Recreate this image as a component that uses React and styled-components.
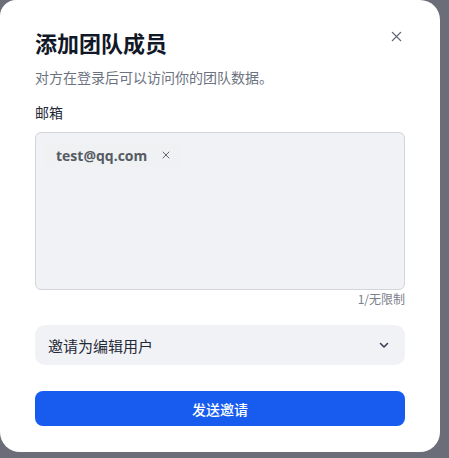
import React from "react";
import styled, { createGlobalStyle } from "styled-components";

const Global = createGlobalStyle`
  html, body { margin: 0; padding: 0; background: #6b6e78; }
  body { font-family: "Noto Sans", "Noto Sans CJK SC", sans-serif; }
  * { box-sizing: border-box; }
`;

const Page = styled.div`
  width: 449px;
  height: 458px;
  overflow: hidden;
`;

const Modal = styled.div`
  width: 440px;
  height: 452px;
  background: #fff;
  border-radius: 16px 20px 20px 20px;
  padding: 27px 35px 0 35px;
  display: flex;
  flex-direction: column;
`;

const Header = styled.div`
  display: flex;
  justify-content: space-between;
  align-items: flex-start;
`;

const Title = styled.h2`
  margin: 0;
  font-size: 22px;
  line-height: 30px;
  font-weight: 700;
  color: #111827;
  font-family: "Noto Sans CJK SC", sans-serif;
`;

const Close = styled.button`
  border: none;
  background: none;
  padding: 0;
  margin-top: 1px;
  margin-right: 1px;
  width: 16px;
  height: 16px;
  display: flex;
  align-items: center;
  justify-content: center;
  color: #6b7280;
`;

const Sub = styled.p`
  margin: 10px 0 0;
  font-size: 14px;
  line-height: 20px;
  color: #6b7280;
  font-family: "Noto Sans CJK SC", sans-serif;
`;

const Label = styled.div`
  margin-top: 15px;
  font-size: 14px;
  line-height: 20px;
  color: #1f2937;
  font-family: "Noto Sans CJK SC", sans-serif;
`;

const Box = styled.div`
  margin-top: 10px;
  height: 158px;
  background: #f1f2f5;
  border: 1px solid #d3d5da;
  border-radius: 6px;
  padding: 10px 9px;
  display: flex;
  align-items: flex-start;
`;

const Tag = styled.span`
  display: inline-flex;
  align-items: center;
  gap: 15px;
  height: 24px;
  padding: 0 12px 0 11px;
  background: #f0f1f3;
  border-radius: 4px;
  font-family: "Open Sans", "Noto Sans", sans-serif;
  font-weight: 700;
  font-size: 14px;
  color: #555a63;
`;

const Counter = styled.div`
  margin-top: 1px;
  text-align: right;
  font-size: 12px;
  line-height: 16px;
  color: #7a808c;
  font-family: "Noto Sans CJK SC", sans-serif;
`;

const Select = styled.div`
  margin-top: 18px;
  height: 40px;
  background: #f1f2f5;
  border-radius: 10px;
  display: flex;
  align-items: center;
  justify-content: space-between;
  padding: 0 15px 0 13px;
  font-size: 15px;
  color: #1f2937;
  font-family: "Noto Sans CJK SC", sans-serif;
`;

const Button = styled.button`
  margin-top: 26px;
  height: 35px;
  width: 100%;
  border: none;
  border-radius: 8px;
  background: #175cef;
  color: #fff;
  font-size: 14px;
  font-weight: 500;
  font-family: "Noto Sans CJK SC", sans-serif;
  display: flex;
  align-items: center;
  justify-content: center;
`;

const X = ({ size = 12, color = "currentColor", w = 1.6 }) => (
  <svg width={size} height={size} viewBox="0 0 12 12" fill="none">
    <path d="M1.5 1.5 L10.5 10.5 M10.5 1.5 L1.5 10.5" stroke={color} strokeWidth={w} strokeLinecap="round" />
  </svg>
);

export default function App() {
  return (
    <Page>
      <Global />
      <Modal>
        <Header>
          <Title>添加团队成员</Title>
          <Close aria-label="close">
            <X size={11} color="#5b6375" w={1.5} />
          </Close>
        </Header>
        <Sub>对方在登录后可以访问你的团队数据。</Sub>
        <Label>邮箱</Label>
        <Box>
          <Tag>
            test@qq.com
            <X size={8} color="#555a63" w={1.4} />
          </Tag>
        </Box>
        <Counter>1/无限制</Counter>
        <Select>
          邀请为编辑用户
          <svg width="12" height="12" viewBox="0 0 12 12" fill="none">
            <path d="M2.5 4.5 L6 8 L9.5 4.5" stroke="#374151" strokeWidth="1.6" strokeLinecap="round" strokeLinejoin="round" />
          </svg>
        </Select>
        <Button>发送邀请</Button>
      </Modal>
    </Page>
  );
}
